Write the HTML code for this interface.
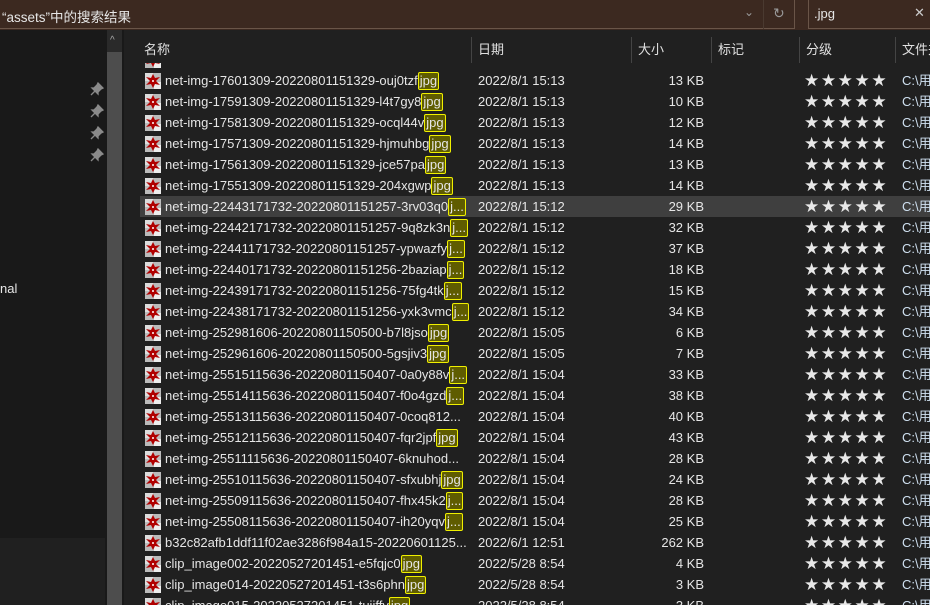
<!DOCTYPE html><html><head><meta charset="utf-8"><style>
html,body{margin:0;width:930px;height:605px;overflow:hidden}
body{background:#191919;font-family:"Liberation Sans","Noto Sans CJK SC",sans-serif;font-size:13px;color:#e6e6e6;position:relative}
.a{position:absolute}
.top{left:0;top:0;width:930px;height:30px;background:#3c2920}
.addr{left:0;top:0;width:795px;height:29px;border-right:1px solid #6a5548;border-bottom:1px solid #6a5548;box-sizing:border-box}
.srch{left:808px;top:0;width:130px;height:29px;border-left:1px solid #6a5548;border-bottom:1px solid #6a5548;box-sizing:border-box}
.list{left:124px;top:30px;width:806px;height:575px;background:#202020}
.row{position:absolute;left:140px;width:790px;height:21px;line-height:21px;white-space:nowrap}
.row.sel{background:#3f3f3f}
.ic{position:absolute;left:5px;top:3px;width:16px;height:16px}
.nm{position:absolute;left:25px}
.hl{display:inline-block;background:#5f5c00;border:1px solid #f0f000;border-radius:2px;line-height:15px;padding:0 1px;box-sizing:border-box;vertical-align:top;margin-top:2px;height:18px}
.dt{position:absolute;left:338px}
.sz{position:absolute;right:226px;text-align:right}
.st{position:absolute;left:664px;top:1px;letter-spacing:1.6px;color:#e8e8e8;font-size:17px;font-family:"DejaVu Sans",sans-serif}
.pt{position:absolute;left:762px;color:#cfe0f0}
.hd{top:37px;height:26px;line-height:26px;color:#e0e0e0;white-space:nowrap}
.sep{top:37px;width:1px;height:26px;background:#444}
</style></head><body>
<div class="a top"></div>
<div class="a addr"></div>
<div class="a" style="left:2px;top:6px;color:#e6e6e6;font-size:13.5px">“assets”中的搜索结果</div>
<div class="a" style="left:744px;top:5px;color:#999;font-size:12px">⌄</div>
<div class="a" style="left:763px;top:0;width:1px;height:29px;background:#4a3a30"></div>
<div class="a" style="left:773px;top:5px;color:#999;font-size:14px">↻</div>
<div class="a srch"></div>
<div class="a" style="left:814px;top:6px">.jpg</div>
<div class="a" style="left:914px;top:5px;color:#ccc;font-size:13px">✕</div>
<div class="a" style="left:0;top:538px;width:105px;height:67px;background:#202020"></div>
<div class="a" style="left:107px;top:30px;width:15px;height:575px;background:#2a2a2a"></div>
<div class="a" style="left:107px;top:52px;width:15px;height:553px;background:#4d4d4d"></div>
<div class="a" style="left:110px;top:35px;color:#aaa;font-size:10px">^</div>
<svg class="a" style="left:90px;top:82px" width="14" height="14" viewBox="0 0 14 14"><path d="M8 1 L13 6 L11 7 L8 10 L8 12 L2 6 L4 6 L7 3 Z M5 9 L1 13" stroke="#8a8a8a" fill="#8a8a8a" stroke-width="1.3"/></svg>
<svg class="a" style="left:90px;top:104px" width="14" height="14" viewBox="0 0 14 14"><path d="M8 1 L13 6 L11 7 L8 10 L8 12 L2 6 L4 6 L7 3 Z M5 9 L1 13" stroke="#8a8a8a" fill="#8a8a8a" stroke-width="1.3"/></svg>
<svg class="a" style="left:90px;top:126px" width="14" height="14" viewBox="0 0 14 14"><path d="M8 1 L13 6 L11 7 L8 10 L8 12 L2 6 L4 6 L7 3 Z M5 9 L1 13" stroke="#8a8a8a" fill="#8a8a8a" stroke-width="1.3"/></svg>
<svg class="a" style="left:90px;top:148px" width="14" height="14" viewBox="0 0 14 14"><path d="M8 1 L13 6 L11 7 L8 10 L8 12 L2 6 L4 6 L7 3 Z M5 9 L1 13" stroke="#8a8a8a" fill="#8a8a8a" stroke-width="1.3"/></svg>
<div class="a" style="left:0;top:281px">nal</div>
<div class="a list"></div>
<div class="a hd" style="left:144px">名称</div>
<div class="a sep" style="left:471px"></div>
<div class="a hd" style="left:478px">日期</div>
<div class="a sep" style="left:631px"></div>
<div class="a hd" style="left:638px">大小</div>
<div class="a sep" style="left:711px"></div>
<div class="a hd" style="left:718px">标记</div>
<div class="a sep" style="left:799px"></div>
<div class="a hd" style="left:806px">分级</div>
<div class="a sep" style="left:895px"></div>
<div class="a hd" style="left:902px">文件夹</div>
<div id="rows"></div>
<script>
var R=[
["net-img-17601309-20220801151329-ouj0tzf","jpg","2022/8/1 15:13","13 KB"],
["net-img-17591309-20220801151329-l4t7gy8","jpg","2022/8/1 15:13","10 KB"],
["net-img-17581309-20220801151329-ocql44v","jpg","2022/8/1 15:13","12 KB"],
["net-img-17571309-20220801151329-hjmuhbg","jpg","2022/8/1 15:13","14 KB"],
["net-img-17561309-20220801151329-jce57pa","jpg","2022/8/1 15:13","13 KB"],
["net-img-17551309-20220801151329-204xgwp","jpg","2022/8/1 15:13","14 KB"],
["net-img-22443171732-20220801151257-3rv03q0","j...","2022/8/1 15:12","29 KB",1],
["net-img-22442171732-20220801151257-9q8zk3n","j...","2022/8/1 15:12","32 KB"],
["net-img-22441171732-20220801151257-ypwazfy","j...","2022/8/1 15:12","37 KB"],
["net-img-22440171732-20220801151256-2baziap","j...","2022/8/1 15:12","18 KB"],
["net-img-22439171732-20220801151256-75fg4tk","j...","2022/8/1 15:12","15 KB"],
["net-img-22438171732-20220801151256-yxk3vmc","j...","2022/8/1 15:12","34 KB"],
["net-img-252981606-20220801150500-b7l8jso","jpg","2022/8/1 15:05","6 KB"],
["net-img-252961606-20220801150500-5gsjiv3","jpg","2022/8/1 15:05","7 KB"],
["net-img-25515115636-20220801150407-0a0y88v","j...","2022/8/1 15:04","33 KB"],
["net-img-25514115636-20220801150407-f0o4gzd","j...","2022/8/1 15:04","38 KB"],
["net-img-25513115636-20220801150407-0coq812...","","2022/8/1 15:04","40 KB"],
["net-img-25512115636-20220801150407-fqr2jpf","jpg","2022/8/1 15:04","43 KB"],
["net-img-25511115636-20220801150407-6knuhod...","","2022/8/1 15:04","28 KB"],
["net-img-25510115636-20220801150407-sfxubhj","jpg","2022/8/1 15:04","24 KB"],
["net-img-25509115636-20220801150407-fhx45k2","j...","2022/8/1 15:04","28 KB"],
["net-img-25508115636-20220801150407-ih20yqv","j...","2022/8/1 15:04","25 KB"],
["b32c82afb1ddf11f02ae3286f984a15-20220601125...","","2022/6/1 12:51","262 KB"],
["clip_image002-20220527201451-e5fqjc0","jpg","2022/5/28 8:54","4 KB"],
["clip_image014-20220527201451-t3s6phn","jpg","2022/5/28 8:54","3 KB"],
["clip_image015-20220527201451-tujiffy","jpg","2022/5/28 8:54","3 KB"]];
var ic='<svg class="ic" viewBox="0 0 16 16"><rect width="16" height="16" fill="#bbb"/><rect x="0" y="0" width="8" height="8" fill="#ddd"/><rect x="9" y="9" width="7" height="7" fill="#eee"/><path d="M8 1 L10 5 L15 4 L11 8 L15 12 L10 11 L8 15 L6 11 L1 12 L5 8 L1 4 L6 5 Z" fill="#b00000"/><circle cx="8" cy="8" r="1" fill="#fff"/></svg>';
var h='';
h+='<div class="row" style="top:63px;height:7px;overflow:hidden"><div style="position:relative;top:-14px;height:21px">'+ic+'</div></div>';
R.forEach(function(r,i){var t=70+i*21;
h+='<div class="row'+(r[4]?' sel':'')+'" style="top:'+t+'px">'+ic+'<span class="nm">'+r[0]+(r[1]?'<span class="hl">'+r[1]+'</span>':'')+'</span><span class="dt">'+r[2]+'</span><span class="sz">'+r[3]+'</span><span class="st">★★★★★</span><span class="pt">C:\\用</span></div>';});
document.getElementById('rows').innerHTML=h;
</script>
</body></html>
